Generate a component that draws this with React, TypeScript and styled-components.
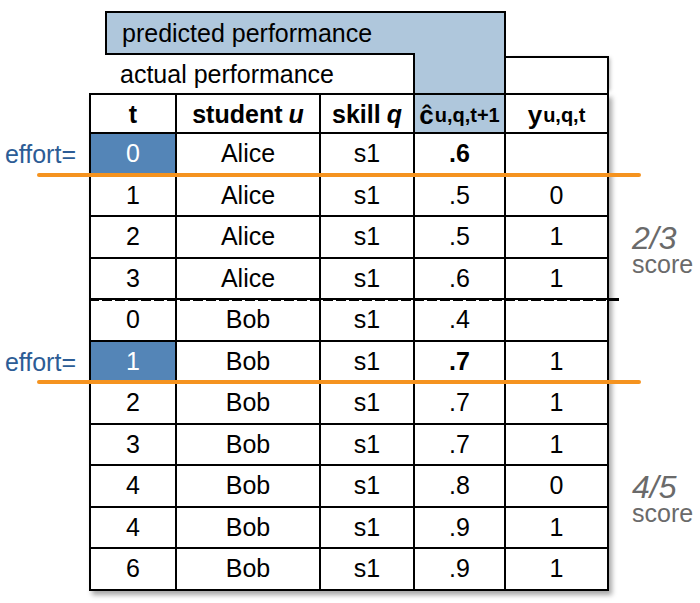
import React from 'react';
import styled, { createGlobalStyle } from 'styled-components';

const Global = createGlobalStyle`
  html, body { margin: 0; padding: 0; background: #fff; }
  body { font-family: "Liberation Sans", Arial, Helvetica, sans-serif; color: #000; }
`;

const ROW_H = 41.5;
const HEAD_H = 41;
const TABLE_TOP = 93;
const LIGHT = '#afc7dc';
const DARK = '#5485b7';
const ORANGE = '#f5931f';
const EFFORT = '#2c5c95';
const GREY = '#6a6a6a';
const FONT = 25;

type Row = { t: string; s: string; q: string; c: string; y: string; effort?: boolean };

const rows: Row[] = [
  { t: '0', s: 'Alice', q: 's1', c: '.6', y: '', effort: true },
  { t: '1', s: 'Alice', q: 's1', c: '.5', y: '0' },
  { t: '2', s: 'Alice', q: 's1', c: '.5', y: '1' },
  { t: '3', s: 'Alice', q: 's1', c: '.6', y: '1' },
  { t: '0', s: 'Bob', q: 's1', c: '.4', y: '' },
  { t: '1', s: 'Bob', q: 's1', c: '.7', y: '1', effort: true },
  { t: '2', s: 'Bob', q: 's1', c: '.7', y: '1' },
  { t: '3', s: 'Bob', q: 's1', c: '.7', y: '1' },
  { t: '4', s: 'Bob', q: 's1', c: '.8', y: '0' },
  { t: '4', s: 'Bob', q: 's1', c: '.9', y: '1' },
  { t: '6', s: 'Bob', q: 's1', c: '.9', y: '1' },
];

const scores = [
  { frac: '2/3', from: 2 },
  { frac: '4/5', from: 8 },
];

const Page = styled.div`
  position: relative;
  width: 700px;
  height: 603px;
  padding-top: 11px;
  box-sizing: border-box;
  display: grid;
  grid-template-columns: 89px 520px 1fr;
  grid-template-rows: 82px auto;
  overflow: hidden;
`;

const TopArea = styled.div`
  grid-column: 2;
  grid-row: 1;
  display: flex;
  flex-direction: column;
`;

const PredictedBar = styled.div`
  margin-left: 16px;
  width: 401px;
  height: 42px;
  box-sizing: border-box;
  border: 2px solid #000;
  border-bottom: none;
  background: ${LIGHT};
  padding-left: 15px;
  display: flex;
  align-items: center;
  font-size: ${FONT}px;
`;

const SecondRow = styled.div`
  display: flex;
  height: 40px;
`;

const Actual = styled.div`
  margin-left: 16px;
  width: 310px;
  box-sizing: border-box;
  border-top: 2px solid #000;
  border-right: 2px solid #000;
  padding-left: 15px;
  display: flex;
  align-items: center;
  font-size: ${FONT}px;
`;

const Stem = styled.div`
  width: 91px;
  box-sizing: border-box;
  background: ${LIGHT};
  border-right: 2px solid #000;
`;

const YTop = styled.div`
  width: 103px;
  margin-top: 3px;
  box-sizing: border-box;
  border-top: 2px solid #000;
  border-right: 2px solid #000;
  box-shadow: 3px 0 4px -2px rgba(0, 0, 0, 0.3);
`;

const Rail = styled.div`
  grid-row: 2;
  display: grid;
  grid-template-rows: ${HEAD_H}px repeat(${rows.length}, ${ROW_H}px);
`;

const LeftRail = styled(Rail)`
  grid-column: 1;
`;

const RightRail = styled(Rail)`
  grid-column: 3;
`;

const EffortLabel = styled.div<{ $row: number }>`
  grid-row: ${(p) => p.$row};
  display: flex;
  align-items: center;
  justify-content: flex-end;
  padding-right: 13px;
  color: ${EFFORT};
  font-size: ${FONT}px;
`;

const Score = styled.div<{ $row: number }>`
  grid-row: ${(p) => p.$row} / span 2;
  display: flex;
  flex-direction: column;
  justify-content: center;
  padding-left: 23px;
  padding-bottom: 20px;
  color: ${GREY};
`;

const Frac = styled.span`
  font-size: 32px;
  font-style: italic;
  line-height: 30px;
`;

const ScoreWord = styled.span`
  font-size: 25px;
  line-height: 22px;
`;

const Table = styled.div`
  grid-column: 2;
  grid-row: 2;
  display: grid;
  grid-template-columns: 86px 144px 94px 91px 103px;
  grid-template-rows: ${HEAD_H - 2}px repeat(${rows.length}, ${ROW_H}px);
  border-left: 2px solid #000;
  border-top: 2px solid #000;
  box-shadow: 3px 4px 5px rgba(0, 0, 0, 0.35);
  align-self: start;
`;

const Cell = styled.div<{ $fill?: 'light' | 'dark'; $bold?: boolean }>`
  box-sizing: border-box;
  border-right: 2px solid #000;
  border-bottom: 2px solid #000;
  display: flex;
  align-items: center;
  justify-content: center;
  font-size: ${FONT}px;
  font-weight: ${(p) => (p.$bold ? 700 : 400)};
  background: ${(p) => (p.$fill === 'light' ? LIGHT : p.$fill === 'dark' ? DARK : '#fff')};
  color: ${(p) => (p.$fill === 'dark' ? '#fff' : '#000')};
`;

const HeadCell = styled(Cell)`
  font-weight: 700;
  padding-top: 2px;
  white-space: nowrap;
`;

const Var = styled.i`
  font-style: italic;
  margin-left: 6px;
`;

const Sym = styled.span`
  font-size: 26px;
  line-height: 1;
`;

const Sub = styled.sub`
  font-size: 20px;
  vertical-align: -7px;
  line-height: 0;
  margin-left: 1px;
`;

const OrangeLine = styled.div<{ $top: number }>`
  position: absolute;
  left: 37px;
  width: 604px;
  top: ${(p) => p.$top}px;
  height: 4px;
  border-radius: 2px;
  background: ${ORANGE};
`;

const DashedLine = styled.div<{ $top: number }>`
  position: absolute;
  left: 89px;
  width: 530px;
  top: ${(p) => p.$top}px;
  height: 3px;
  background: repeating-linear-gradient(90deg, #000 0 10px, transparent 10px 13px);
`;

const boundary = (i: number) => Math.round(TABLE_TOP + HEAD_H + (i + 1) * ROW_H);

export default function App() {
  return (
    <>
      <Global />
      <Page>
        <TopArea>
          <PredictedBar>predicted performance</PredictedBar>
          <SecondRow>
            <Actual>actual performance</Actual>
            <Stem />
            <YTop />
          </SecondRow>
        </TopArea>

        <LeftRail>
          {rows.map((r, i) =>
            r.effort ? (
              <EffortLabel key={i} $row={i + 2}>
                effort=
              </EffortLabel>
            ) : null
          )}
        </LeftRail>

        <Table>
          <HeadCell>t</HeadCell>
          <HeadCell>
            student<Var>u</Var>
          </HeadCell>
          <HeadCell>
            skill<Var>q</Var>
          </HeadCell>
          <HeadCell $fill="light">
            <Sym>ĉ</Sym>
            <Sub>u,q,t+1</Sub>
          </HeadCell>
          <HeadCell>
            <Sym>y</Sym>
            <Sub>u,q,t</Sub>
          </HeadCell>
          {rows.map((r, i) => (
            <React.Fragment key={i}>
              <Cell $fill={r.effort ? 'dark' : undefined}>{r.t}</Cell>
              <Cell>{r.s}</Cell>
              <Cell>{r.q}</Cell>
              <Cell $bold={r.effort}>{r.c}</Cell>
              <Cell>{r.y}</Cell>
            </React.Fragment>
          ))}
        </Table>

        <RightRail>
          {scores.map((s) => (
            <Score key={s.frac} $row={s.from + 2}>
              <Frac>{s.frac}</Frac>
              <ScoreWord>score</ScoreWord>
            </Score>
          ))}
        </RightRail>

        {rows.map((r, i) =>
          r.effort ? <OrangeLine key={i} $top={boundary(i) - 3} /> : null
        )}
        <DashedLine $top={boundary(3) - 2} />
      </Page>
    </>
  );
}
